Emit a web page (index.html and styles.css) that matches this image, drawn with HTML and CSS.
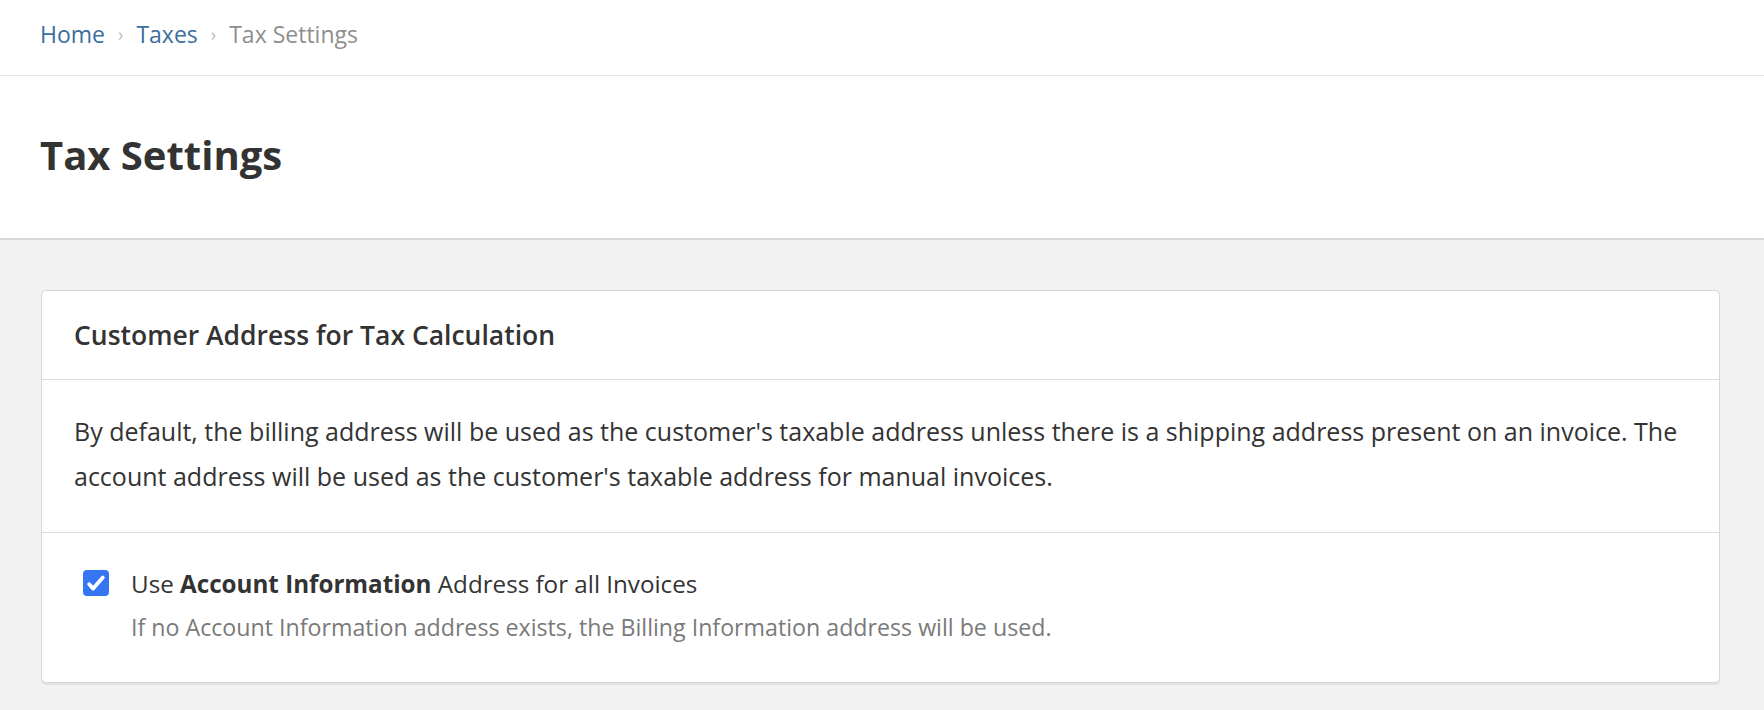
FILE: index.html
```html
<!DOCTYPE html>
<html lang="en">
<head>
<meta charset="utf-8">
<title>Tax Settings</title>
<link rel="stylesheet" href="styles.css">
</head>
<body>
<header class="page-header">
  <nav class="breadcrumb">
    <a href="#" class="crumb-link">Home</a>
    <span class="crumb-sep">›</span>
    <a href="#" class="crumb-link">Taxes</a>
    <span class="crumb-sep">›</span>
    <span class="crumb-current">Tax Settings</span>
  </nav>
  <div class="title-row">
    <h1 class="page-title">Tax Settings</h1>
  </div>
</header>
<main class="content">
  <section class="card">
    <div class="card-header">
      <h2 class="card-title">Customer Address for Tax Calculation</h2>
    </div>
    <div class="card-body">
      <p class="description">By default, the billing address will be used as the customer's taxable address unless there is a shipping address present on an invoice. The account address will be used as the customer's taxable address for manual invoices.</p>
    </div>
    <div class="card-option">
      <label class="option">
        <span class="checkbox" aria-checked="true">
          <svg viewBox="0 0 26 26" width="26" height="26"><path d="M6.2 14.2 L10.2 18.6 L19.8 7.6" fill="none" stroke="#fff" stroke-width="3.8" stroke-linecap="round" stroke-linejoin="round"/></svg>
        </span>
        <span class="option-text">
          <span class="option-label">Use <strong>Account Information</strong> Address for all Invoices</span>
          <span class="option-help">If no Account Information address exists, the Billing Information address will be used.</span>
        </span>
      </label>
    </div>
  </section>
</main>
</body>
</html>
```
FILE: styles.css
```css
* { box-sizing: border-box; }
html, body { margin: 0; padding: 0; }
body {
  background: #f2f2f2;
  font-family: "Open Sans", "Lato", sans-serif;
  color: #333333;
  height: 710px;
}
.page-header {
  background: #ffffff;
  border-bottom: 2px solid #d9d9d9;
}
.breadcrumb {
  height: 76px;
  display: flex;
  align-items: center;
  gap: 13px;
  padding: 0 0 7px 40px;
  border-bottom: 1px solid #e6e6e6;
  font-size: 23px;
}
.crumb-link { color: #3a6f9e; text-decoration: none; }
.crumb-sep { color: #bdbdbd; font-size: 18px; }
.crumb-current { color: #8e8e8e; }
.title-row {
  height: 162px;
  display: flex;
  align-items: center;
  padding: 0 0 5px 40px;
}
.page-title {
  margin: 0;
  font-size: 40px;
  font-weight: 700;
  color: #333333;
}
.content {
  padding: 50px 44px 0 41px;
}
.card {
  background: #ffffff;
  border: 1px solid #d6d6d6;
  border-radius: 5px;
  box-shadow: 0 2px 0 #e2e2e2;
}
.card-header {
  height: 89px;
  display: flex;
  align-items: center;
  padding-left: 32px;
  border-bottom: 1px solid #dcdcdc;
}
.card-title {
  margin: 0;
  font-size: 26.5px;
  font-weight: 600;
  color: #333333;
}
.card-body {
  padding: 29px 32px 33px;
  border-bottom: 1px solid #dcdcdc;
}
.description {
  margin: 0;
  font-size: 25px;
  line-height: 45px;
  color: #333333;
}
.card-option {
  padding: 37px 32px 41px 41px;
}
.option {
  display: flex;
  align-items: flex-start;
  gap: 22px;
}
.checkbox {
  width: 26px;
  height: 26px;
  flex: none;
  border-radius: 4px;
  background: #3676f2;
  display: flex;
}
.option-text {
  display: flex;
  flex-direction: column;
  gap: 15px;
}
.option-label {
  font-size: 24.2px;
  line-height: 28px;
  color: #333333;
}
.option-label strong { font-weight: 700; }
.option-help {
  font-size: 23.2px;
  line-height: 28px;
  color: #7a7a7a;
}
```
